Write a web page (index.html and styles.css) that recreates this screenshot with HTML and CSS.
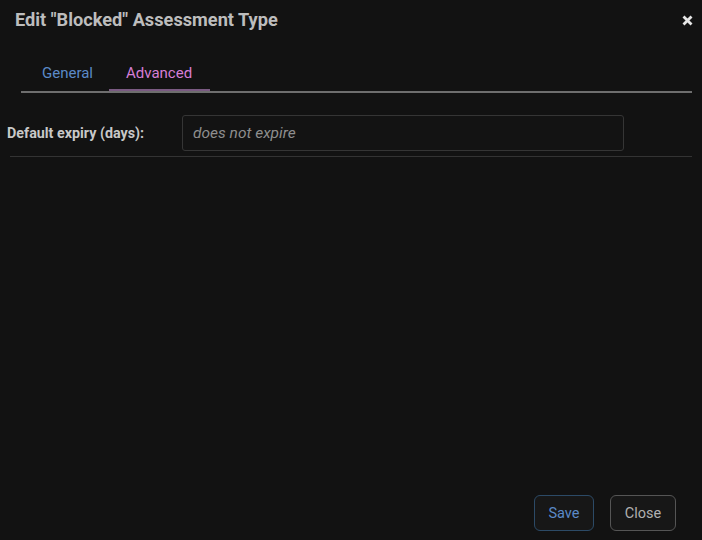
FILE: index.html
```html
<!DOCTYPE html>
<html>
<head>
<meta charset="utf-8">
<link rel="stylesheet" href="styles.css">
</head>
<body>
<div class="dialog">
  <div class="header">
    <h1 class="title">Edit "Blocked" Assessment Type</h1>
    <span class="close-x">
      <svg width="11" height="11" viewBox="0 0 11 11"><path d="M1.5 1.5 L9.5 9.5 M9.5 1.5 L1.5 9.5" stroke="#e6e6e6" stroke-width="2.8" stroke-linecap="butt"/></svg>
    </span>
  </div>
  <div class="tabs">
    <div class="tab">General</div>
    <div class="tab active">Advanced</div>
  </div>
  <div class="content">
    <div class="row">
      <label class="label">Default expiry (days):</label>
      <input class="input" type="text" placeholder="does not expire">
    </div>
  </div>
  <div class="footer">
    <button class="btn btn-save">Save</button>
    <button class="btn btn-close">Close</button>
  </div>
</div>
</body>
</html>
```
FILE: styles.css
```css
html, body {
  margin: 0;
  padding: 0;
  background: #121212;
  height: 100%;
}
body {
  font-family: Roboto, "Liberation Sans", sans-serif;
  font-size: 14px;
  color: #c8c8c8;
}
.dialog {
  height: 540px;
  display: flex;
  flex-direction: column;
}
.header {
  display: flex;
  align-items: center;
  justify-content: space-between;
  padding: 9px 9px 0 15px;
  height: 21px;
}
.title {
  margin: 0;
  font-size: 18.2px;
  font-weight: bold;
  color: #bdbdbd;
}
.close-x {
  display: flex;
  margin-top: 1px;
}
.tabs {
  display: flex;
  margin: 35px 10px 0 21px;
  border-bottom: 2px solid #6e6e6e;
}
.tab {
  padding: 0 16px 7px 21px;
  font-size: 15px;
  color: #5b8ac8;
  line-height: 17px;
  border-bottom: 2px solid transparent;
}
.tab.active {
  color: #d67ed6;
  padding: 0 18px 7px 17px;
  border-bottom-color: #7a5a82;
}
.content {
  margin: 22px 10px 0 10px;
}
.row {
  display: flex;
  align-items: center;
  padding-bottom: 5px;
  border-bottom: 1px solid #333333;
}
.label {
  width: 175px;
  margin-left: -3px;
  font-size: 14.3px;
  font-weight: bold;
  color: #c8c8c8;
}
.input {
  width: 442px;
  height: 36px;
  box-sizing: border-box;
  background: #131313;
  border: 1px solid #353535;
  border-radius: 3px;
  padding: 0 10px;
  font-family: Roboto, "Liberation Sans", sans-serif;
  font-size: 15.5px;
  color: #c8c8c8;
  outline: none;
}
.input::placeholder {
  color: #8e8e8e;
  font-style: italic;
}
.footer {
  margin-top: auto;
  display: flex;
  justify-content: flex-end;
  gap: 16px;
  padding: 0 26px 9px 0;
}
.btn {
  height: 36px;
  box-sizing: border-box;
  background: #171717;
  border-radius: 6px;
  font-family: Roboto, "Liberation Sans", sans-serif;
  font-size: 14.5px;
  padding: 0 10px;
}
.btn-save {
  width: 60px;
  border: 1px solid #2c4a66;
  color: #5b8ac8;
}
.btn-close {
  width: 66px;
  border: 1px solid #555555;
  color: #b0b0b0;
}
```
